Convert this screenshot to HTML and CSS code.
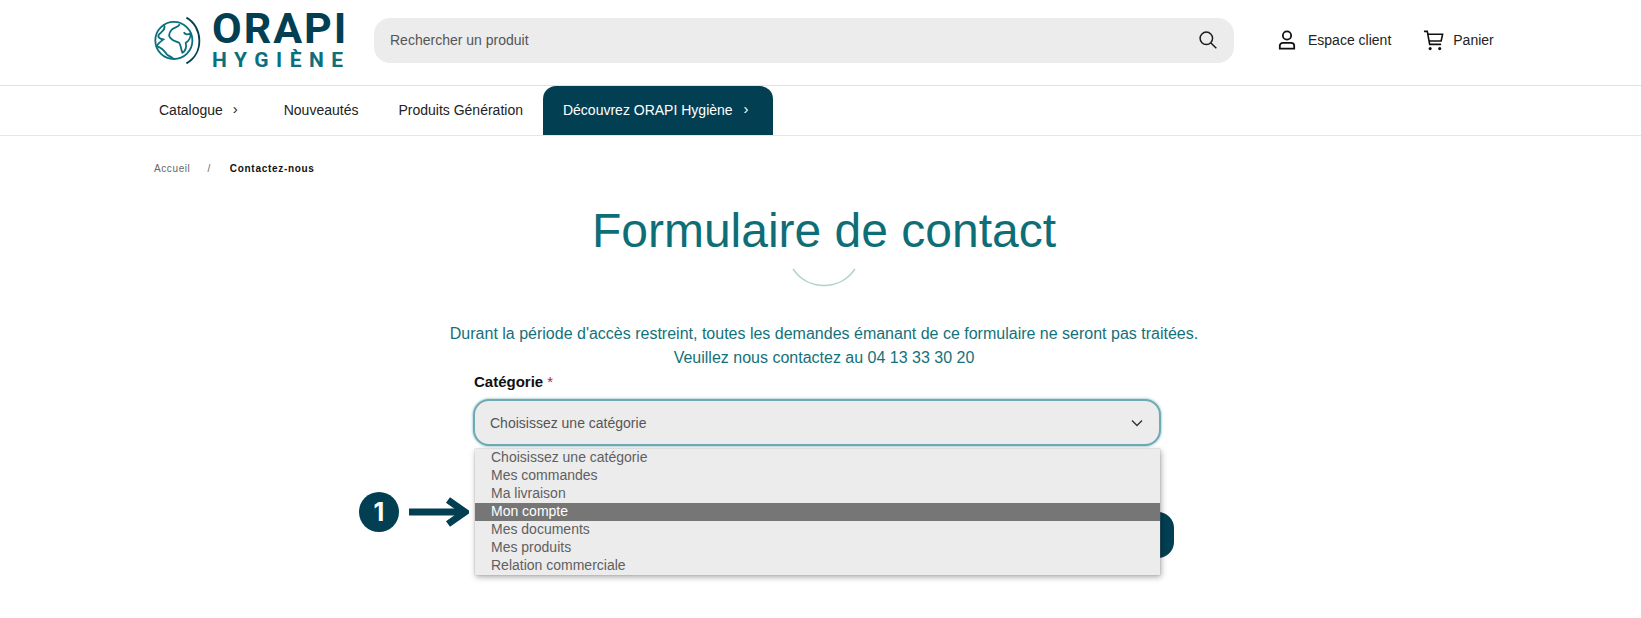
FILE: index.html
```html
<!DOCTYPE html>
<html lang="fr">
<head>
  <meta charset="UTF-8" />
  <title>Formulaire de contact</title>
  <link rel="stylesheet" href="styles.css">
</head>
<body>

  <header class="topbar">
    <a class="logo" href="#">
      <svg class="logo-globe" viewBox="70 50 145 155">
        <circle class="globe-line" cx="130" cy="129" r="56" />
        <path class="globe-line" d="M100 82 C108 95 92 102 84 112 C80 120 90 124 98 126 C88 134 80 140 78 146 C90 150 100 158 108 170 C114 176 122 178 128 184" />
        <path class="globe-line" d="M148 80 C140 92 130 88 122 98 C116 106 112 114 120 122 C128 132 136 130 146 136 C152 142 150 154 156 166 C166 160 168 146 166 136 C176 130 182 118 180 108 C172 112 164 112 160 104" />
        <path class="globe-arc" d="M168 60 C218 88 222 168 168 198" />
      </svg>
      <span class="logo-words">
        <span class="logo-top">ORAPI</span>
        <span class="logo-bottom">HYGIÈNE</span>
      </span>
    </a>

    <div class="search">
      <span>Rechercher un produit</span>
      <svg class="icon-search" viewBox="0 0 24 24">
        <circle cx="10" cy="10" r="7.5" />
        <path d="M15.5 15.5 L22 22" />
      </svg>
    </div>

    <a class="top-link client" href="#">
      <svg class="icon-user" viewBox="0 0 20 22">
        <circle cx="10" cy="6" r="4.6" />
        <path d="M2 20.5 V17.5 C2 15.5 3.500 14.200 5.500 14.200 H14.500 C16.500 14.200 18 15.500 18 17.500 V20.500 Z" />
      </svg>
      Espace client
    </a>
    <a class="top-link cart" href="#">
      <svg class="icon-cart" viewBox="0 0 22 22">
        <path d="M1 1.500 H4.500 L7 15 H19" />
        <path d="M5 4.500 H20.500 L19 11.500 H6.300" />
        <circle class="dot" cx="7.500" cy="19.500" r="1.600" />
        <circle class="dot" cx="17.500" cy="19.500" r="1.600" />
      </svg>
      Panier
    </a>
  </header>

  <nav class="menu">
    <a href="#" class="menu-item catalog">Catalogue <span class="chev">›</span></a>
    <a href="#" class="menu-item news">Nouveautés</a>
    <a href="#" class="menu-item gen">Produits Génération</a>
    <a href="#" class="menu-item active">Découvrez ORAPI Hygiène <span class="chev">›</span></a>
  </nav>

  <div class="crumbs">
    <a href="#">Accueil</a>
    <span class="sep">/</span>
    <strong>Contactez-nous</strong>
  </div>

  <main class="contact">
    <h1>Formulaire de contact</h1>
    <svg class="smile" viewBox="0 0 64 20">
      <path d="M1 1 C16 23 48 23 63 1" />
    </svg>

    <p class="notice">Durant la période d'accès restreint, toutes les demandes émanant de ce formulaire ne seront pas traitées.<br>Veuillez nous contactez au 04 13 33 30 20</p>

    <form class="form">
      <label class="field-label">Catégorie <span class="req">*</span></label>
      <div class="field">
        <div class="select-box">
          <span>Choisissez une catégorie</span>
          <svg class="icon-down" viewBox="0 0 12 8">
            <path d="M1 1.500 L6 6.500 L11 1.500" />
          </svg>
        </div>

        <ul class="options">
          <li>Choisissez une catégorie</li>
          <li>Mes commandes</li>
          <li>Ma livraison</li>
          <li class="selected">Mon compte</li>
          <li>Mes documents</li>
          <li>Mes produits</li>
          <li>Relation commerciale</li>
        </ul>

        <!-- annotation on top of the screenshot -->
        <div class="callout">
          <span class="callout-num">1</span>
          <svg class="callout-arrow" viewBox="0 0 62 32">
            <path d="M2 16 H56" />
            <path d="M41 4 L58 16 L41 28" />
          </svg>
        </div>
      </div>

      <div class="actions">
        <button type="button" class="send"></button>
      </div>
    </form>
  </main>

</body>
</html>
```

FILE: styles.css
```css
* {
  box-sizing: border-box;
}

html, body {
  height: 618px;
  overflow: hidden;
}

body {
  margin: 0;
  background: #fff;
  color: #1c1c1c;
  font-family: 'Liberation Sans', Arial, sans-serif;
  font-size: 14px;
}

a {
  color: inherit;
  text-decoration: none;
}

/* Top bar */
.topbar {
  display: flex;
  align-items: center;
  height: 86px;
  padding: 0 0 5px 154px;
  border-bottom: 1px solid #e2e2e2;
}

.logo {
  display: flex;
  align-items: center;
  width: 220px;
  flex: none;
}

.logo-globe {
  width: 48px;
  height: 52px;
  margin-right: 10px;
  flex: none;
}

.globe-line, .globe-arc {
  fill: none;
  stroke-width: 5.500;
}

.globe-line {
  stroke: #0d6f7c;
}

.globe-arc {
  stroke: #033f53;
}

.logo-words {
  display: flex;
  flex-direction: column;
  font-family: Roboto, sans-serif;
  font-weight: 700;
  line-height: 1;
}

.logo-top {
  color: #033f53;
  font-size: 43px;
  letter-spacing: 2px;
  line-height: 38px;
}

.logo-bottom {
  color: #0d6f7c;
  font-size: 21px;
  letter-spacing: 7.5px;
  line-height: 22px;
  margin-top: 2px;
}

.search {
  display: flex;
  align-items: center;
  justify-content: space-between;
  width: 860px;
  height: 45px;
  padding: 0 16px 0 16px;
  background: #ececec;
  border-radius: 16px;
  color: #555;
  flex: none;
}

.icon-search {
  width: 20px;
  height: 20px;
  fill: none;
  stroke: #1c1c1c;
  stroke-width: 1.800;
}

.top-link {
  display: flex;
  align-items: center;
  color: #222;
}

.client {
  margin-left: 44px;
}

.cart {
  margin-left: 32px;
}

.icon-user {
  width: 18px;
  height: 20px;
  margin-right: 12px;
  fill: none;
  stroke: #111;
  stroke-width: 2;
}

.icon-cart {
  width: 21px;
  height: 21px;
  margin-right: 9px;
  fill: none;
  stroke: #111;
  stroke-width: 1.700;
}

.icon-cart .dot {
  fill: #111;
  stroke: none;
}

/* Menu */
.menu {
  display: flex;
  align-items: stretch;
  height: 50px;
  padding-left: 159px;
  border-bottom: 1px solid #e6e6e6;
}

.menu-item {
  display: flex;
  align-items: center;
  height: 49px;
  padding-bottom: 2px;
  white-space: pre;
  color: #222;
}

.chev {
  margin-left: 6px;
  font-size: 15px;
  position: relative;
  top: -1px;
}

.news {
  margin-left: 46px;
}

.gen {
  margin-left: 40px;
}

.active {
  margin-left: 20px;
  padding: 0 24px 2px 20px;
  width: 230px;
  background: #033f53;
  color: #fff;
  border-radius: 13px 13px 0 0;
}

.active .chev {
  margin-left: 7px;
}

/* Breadcrumb */
.crumbs {
  display: flex;
  align-items: center;
  height: 12px;
  margin-top: 26px;
  padding-left: 154px;
  font-size: 10px;
  letter-spacing: 0.6px;
  color: #666;
}

.sep {
  margin: 0 19px 0 17px;
}

.crumbs strong {
  color: #111;
  letter-spacing: 0.7px;
}

/* Contact form */
.contact {
  width: 750px;
  margin-left: 449px;
  text-align: center;
}

h1 {
  margin: 27px 0 0;
  font-size: 48px;
  font-weight: 400;
  line-height: 60px;
  color: #0e6e78;
}

.smile {
  display: block;
  width: 64px;
  height: 20px;
  margin: 7px auto 0;
  fill: none;
  stroke: #acd3cd;
  stroke-width: 1.500;
}

.notice {
  margin: 34px 0 0;
  font-size: 16px;
  line-height: 24px;
  color: #14717a;
}

.form {
  width: 701px;
  margin: 2px 0 0 24px;
  text-align: left;
}

.field-label {
  display: block;
  height: 27px;
  padding-left: 1px;
  line-height: 20px;
  font-size: 15px;
  font-weight: 700;
  color: #111;
}

.req {
  color: #b3262e;
  font-weight: 400;
}

.field {
  position: relative;
  width: 688px;
}

.select-box {
  display: flex;
  align-items: center;
  justify-content: space-between;
  height: 47px;
  padding: 0 16px 0 15px;
  background: #ececec;
  border: 2px solid #6fa9b4;
  border-radius: 16px;
  box-shadow: 0 0 2px 1px #bcd8dc;
  color: #555;
}

.icon-down {
  width: 12px;
  height: 8px;
  fill: none;
  stroke: #333;
  stroke-width: 1.400;
}

.options {
  position: absolute;
  top: 50px;
  left: 2px;
  width: 685px;
  margin: 0;
  padding: 0;
  list-style: none;
  background: #ececec;
  box-shadow: 0 0 1px #999, 1px 2px 6px rgba(0, 0, 0, 0.35);
  z-index: 5;
  color: #5f5f5f;
}

.options li {
  height: 18px;
  padding-left: 16px;
  line-height: 17px;
}

.options .selected {
  background: #767676;
  color: #fff;
}

.callout {
  position: absolute;
  top: 93px;
  left: -114px;
  display: flex;
  align-items: center;
  z-index: 6;
}

.callout-num {
  display: flex;
  align-items: center;
  justify-content: center;
  width: 40px;
  height: 40px;
  border-radius: 50%;
  background: #033f53;
  color: #fff;
  font: 700 25px 'Inter', sans-serif;
}

.callout-arrow {
  width: 62px;
  height: 32px;
  margin-left: 8px;
  fill: none;
  stroke: #033f53;
  stroke-width: 7;
}

.actions {
  display: flex;
  justify-content: flex-end;
  margin-top: 66px;
}

.send {
  width: 200px;
  height: 46px;
  border: 0;
  border-radius: 16px;
  background: #033f53;
}
```
